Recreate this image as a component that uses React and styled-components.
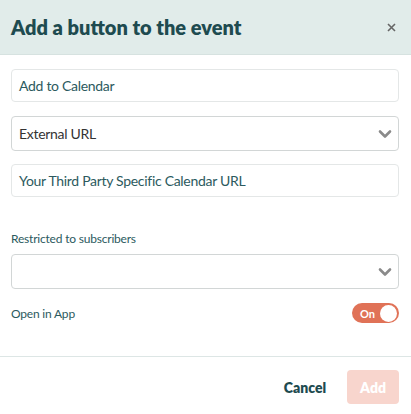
import React, { useState } from "react"
import styled, { createGlobalStyle } from "styled-components"

const GlobalStyles = createGlobalStyle`
  body {
    margin: 0;
    background: #fff;
    font-family: Lato, "Open Sans", sans-serif;
  }
`

const Modal = styled.div`
  width: 411px;
  height: 414px;
  display: flex;
  flex-direction: column;
  background: #fff;
`

const Header = styled.header`
  height: 55px;
  box-sizing: border-box;
  padding: 0 13px 0 11px;
  display: flex;
  align-items: center;
  justify-content: space-between;
  background: #e1ecea;
  border-bottom: 1px solid #d6e2e0;
`

const Title = styled.h1`
  margin: 0;
  font-size: 20px;
  font-weight: 800;
  color: #1e4b50;
`

const Close = styled.button`
  border: 0;
  background: none;
  padding: 0;
  width: 14px;
  height: 14px;
  display: flex;
  align-items: center;
  justify-content: center;
  cursor: pointer;
`

const Body = styled.div`
  padding: 14px 12px 0 11px;
  display: flex;
  flex-direction: column;
  flex: 1;
`

const Field = styled.div`
  height: ${(p) => p.h || 33}px;
  box-sizing: border-box;
  border: 1px solid ${(p) => (p.select ? "#d2d6d6" : "#e4e7e7")};
  border-radius: 4px;
  padding: 0 6px 0 7px;
  display: flex;
  align-items: center;
  justify-content: space-between;
  margin-bottom: ${(p) => p.mb || 0}px;
  font-size: 14px;
  letter-spacing: -0.3px;
  color: ${(p) => (p.select ? "#333" : "#2c5a5e")};
`

const Label = styled.div`
  font-size: 12px;
  letter-spacing: -0.2px;
  color: #2c5a5e;
  margin-bottom: 8px;
`

const Row = styled.div`
  display: flex;
  align-items: center;
  justify-content: space-between;
  height: 20px;
  margin-top: 14px;
  font-size: 12px;
  letter-spacing: -0.2px;
  color: #2c5a5e;
`

const Toggle = styled.div`
  width: 47px;
  height: 20px;
  box-sizing: border-box;
  border-radius: 10px;
  background: #e07257;
  display: flex;
  align-items: center;
  justify-content: space-between;
  padding: 0 2px 0 8px;
  font-size: 11px;
  font-weight: 700;
  letter-spacing: 0;
  color: #fff;
`

const Knob = styled.span`
  width: 17px;
  height: 17px;
  border-radius: 50%;
  background: #fff;
`

const Footer = styled.footer`
  border-top: 1px solid #dde6e5;
  height: 58px;
  box-sizing: border-box;
  padding: 13px 12px 0 0;
  display: flex;
  justify-content: flex-end;
  align-items: flex-start;
  gap: 21px;
`

const Button = styled.button`
  height: 34px;
  border: 0;
  border-radius: 4px;
  padding: 0 ${(p) => (p.primary ? 13 : 0)}px;
  background: ${(p) => (p.primary ? "#f8d5cd" : "transparent")};
  color: ${(p) => (p.primary ? "#fff" : "#1e4b50")};
  font-family: Lato, "Open Sans", sans-serif;
  font-size: 14px;
  font-weight: 800;
  cursor: pointer;
`

const Chevron = () => (
  <svg width="14" height="10" viewBox="0 0 14 10">
    <path d="M2 2.5 L7 7.5 L12 2.5" fill="none" stroke="#8a8a8a" strokeWidth="2.6" strokeLinecap="round" strokeLinejoin="round" />
  </svg>
)

const App = () => {
  const [on] = useState(true)
  return (
    <>
      <GlobalStyles />
      <Modal>
        <Header>
          <Title>Add a button to the event</Title>
          <Close aria-label="close">
            <svg width="9" height="9" viewBox="0 0 9 9">
              <path d="M1 1 L8 8 M8 1 L1 8" stroke="#666" strokeWidth="1.6" />
            </svg>
          </Close>
        </Header>
        <Body>
          <Field mb={14}>Add to Calendar</Field>
          <Field select h={35} mb={13}>
            External URL
            <Chevron />
          </Field>
          <Field mb={34}>Your Third Party Specific Calendar URL</Field>
          <Label>Restricted to subscribers</Label>
          <Field select h={35}>
            <span />
            <Chevron />
          </Field>
          <Row>
            Open in App
            <Toggle>
              {on ? "On" : "Off"}
              <Knob />
            </Toggle>
          </Row>
        </Body>
        <Footer>
          <Button>Cancel</Button>
          <Button primary>Add</Button>
        </Footer>
      </Modal>
    </>
  )
}

export default App
